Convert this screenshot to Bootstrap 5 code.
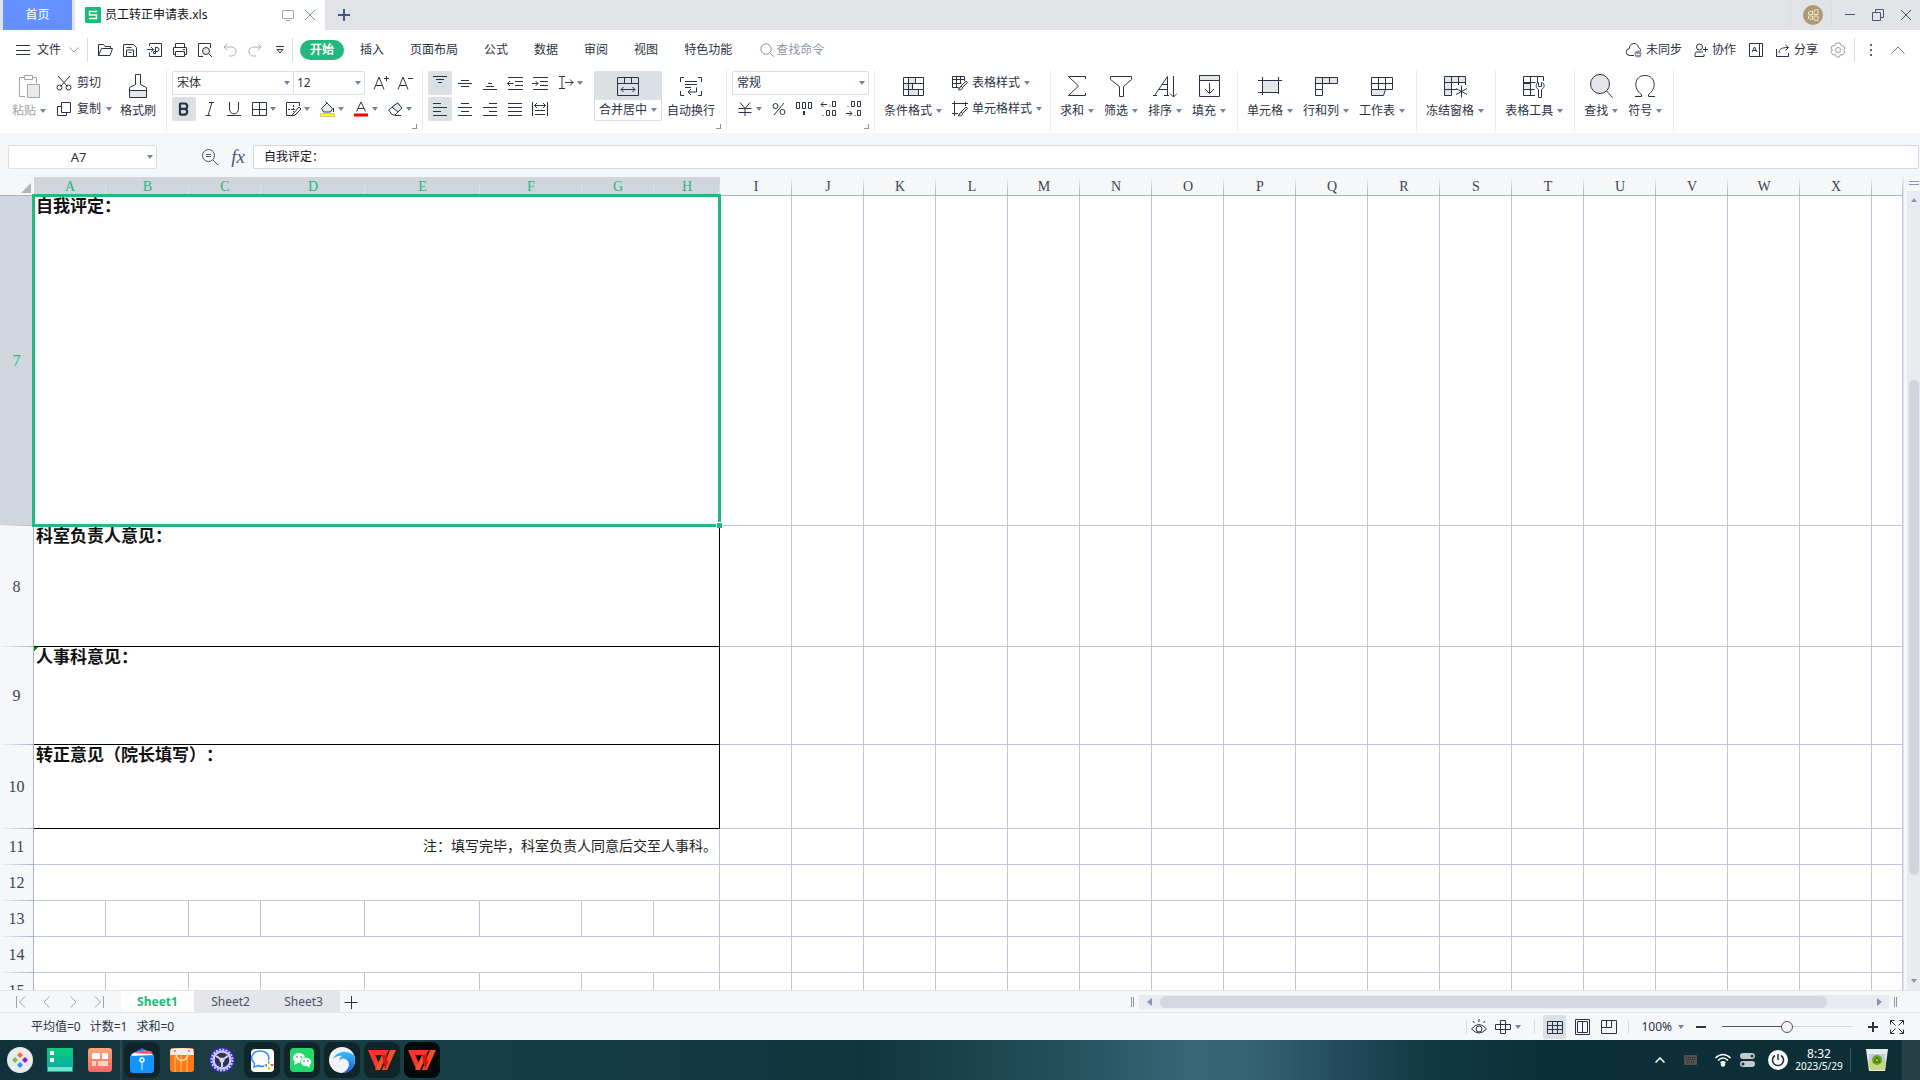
<!DOCTYPE html>
<html lang="zh-CN">
<head>
<meta charset="utf-8">
<meta name="viewport" content="width=device-width, initial-scale=1">
<title>员工转正申请表.xls</title>
<link rel="stylesheet" href="https://cdn.jsdelivr.net/npm/bootstrap@5.3.0/dist/css/bootstrap.min.css">
<style>
:root{--ink:#2b3245;--mute:#7683a0;--green:#22b97c;--line:#bfc6da;--panel:#f5f7f9}
body{font:12px/24px "Noto Sans","Noto Sans CJK SC",sans-serif;color:var(--ink);background:var(--panel);overflow:hidden;text-spacing-trim:space-all}
body>*{flex-shrink:0}
svg{flex:none;display:block}
svg:not([fill]){fill:none}
svg:not([stroke]){stroke:currentColor}
.i14{width:14px;height:14px}.i16{width:16px;height:16px}
.tool{font:inherit;color:inherit;background:none;border:0;padding:0;display:flex;align-items:center;justify-content:center;flex:none;white-space:nowrap}
.arrow{width:0;height:0;border:3px solid transparent;border-top:4px solid var(--mute);border-bottom:0;flex:none}
.rule{width:1px;height:24px;background:#d9dbe0;flex:none}
/* title bar */
.titlebar{height:30px;background:#e1e3e7;padding-left:3px}
.home-tab{width:69px;background:#6490ff;color:#fff;margin-right:3px}
.doc-tab{width:250px;background:#fff;padding:0 8px 0 10px;color:#111}
.doc-tab span{flex:1 1 auto}
.avatar{width:20px;height:20px;border-radius:50%;background:#ab9a75;color:#eee2bd}
.winbtn{width:28px;height:30px;color:#48577a}
/* menu bar */
.menubar{height:40px;background:#fff;padding:0 15px}
.file-btn{gap:8px}
.file-btn svg:first-child{margin-right:-2px}
.quick .tool{width:25px;height:24px}
.menu-link{padding:0 13px;line-height:20px;color:var(--ink);white-space:nowrap}
.menu-link.active{background:var(--green);color:#fff;font-weight:700;border-radius:10px;margin:0 3px;padding:0 10px}
.search-box{gap:2px;padding-left:15px}
.finder{width:80px;border:0;padding:0;font:inherit;line-height:20px;background:none}
.finder::placeholder{color:#8b96ac;opacity:1}
/* ribbon */
.ribbon{height:63px;background:#fff}
.rgroup{position:relative;flex:none;display:flex;padding:1px 6px 0 4px;border-right:1px solid #ebedf0;height:61px}
.launcher{position:absolute;right:5px;bottom:2px;width:5px;height:5px;padding:0;background:none;border:solid #8b96ac;border-width:0 1px 1px 0}
.g-clip{width:167px}.g-font{width:256px;padding-left:5px}.g-align{width:304px;padding-left:5px}.g-num{width:148px;padding-left:5px}.g-style{width:176px}
.stack2{display:flex;flex-direction:column;gap:2px}
.line24{display:flex;height:24px}
.sq{width:24px;height:24px;border-radius:2px}
.on{background:#dbe0e5}
.g-font .on{margin-right:2px}
.drop{width:34px;height:24px;gap:3px}
.gap1{gap:1px}
.big{flex-direction:column;height:50px;padding:0 5px;justify-content:flex-start}
.big>svg{height:29px;width:24px}
.big>span{display:flex;align-items:center;gap:4px;line-height:21px;height:21px}
.clip1{margin-left:5px;width:40px;color:#9fa3ac}
.clip2{width:67px}
.clip2 .tool{gap:5px;height:24px;justify-content:flex-start;padding-left:7px}
.paint{padding:0}
.merge{width:68px;padding:0;background:#dbe0e5;border-radius:2px;margin-left:7px}
.merge>span{background:#fff;width:66px;justify-content:center;height:20px;line-height:20px}
.styles .tool{height:24px;gap:4px;justify-content:flex-start;padding-left:5px}
.pick{appearance:none;border:1px solid #dcdee3;border-radius:2px;height:24px;padding:0 4px;font:inherit;line-height:20px;color:var(--ink);background:#fff url("data:image/svg+xml,%3Csvg xmlns='http://www.w3.org/2000/svg' width='6' height='4'%3E%3Cpath d='M0 0h6L3 4z' fill='%237683a0'/%3E%3C/svg%3E") no-repeat right 3px center}
.pick-font{width:122px}.pick-size{width:72px;margin-left:-1px;padding-left:3px;margin-right:4px}.pick-num{width:137px}
/* formula bar */
.fbar{height:44px;padding:12px 1px 8px 8px}
.pick-cell{width:149px;text-align-last:center;padding:0 12px 0 4px;font-size:13px}
.lens{width:26px;margin-left:40px;color:#48577a}
.fx-sign{font:italic 19px/24px "Liberation Serif",serif;width:22px;color:#48577a}
.formula{border:1px solid #d3d6de;border-radius:2px;height:24px;padding:0 10px;font:inherit;color:#111;min-width:0}
/* grid */
.sheet{table-layout:fixed;width:100%;border-collapse:separate;border-spacing:0;background:#fff;font-family:"Liberation Serif","Noto Sans CJK SC",serif}
.sheet td{border:solid var(--line);border-width:0 1px 1px 0;padding:0 3px}
.sheet th{font-weight:400;text-align:center;color:#3d4352;padding:0;background-color:var(--panel)}
.sheet thead th{height:19px;font-size:14px;line-height:16px;padding-top:2px;border-bottom:1px solid #a9b1c9;background-image:linear-gradient(#f5f7f9,#a9b1c9);background-size:1px 100%;background-position:right;background-repeat:no-repeat}
.sheet tbody th{font-size:16px;border-right:1px solid #a9b1c9;background-image:linear-gradient(90deg,#f5f7f9,#a9b1c9);background-size:100% 1px;background-position:bottom;background-repeat:no-repeat}
.sheet thead th.hot,.sheet tbody th.hot{background-color:#d1d5dd;color:var(--green)}
.sheet thead th.hot{background-image:linear-gradient(#d1d5dd,#e4e6eb)}
.sheet thead th.corner{background-image:none}
.sheet .corner svg{margin:2px 3px 0 auto}
.sheet .form-cell{border-color:#000;font-weight:700;font-size:17px;line-height:22px;vertical-align:top;color:#111;padding:0 2px}
.sheet .note-cell{font-size:14px;text-align:right;color:#222;padding:0 2px}
.sheet .flagged{background:linear-gradient(135deg,#0a8a1c 3px,transparent 3px) no-repeat}
.selected-cell{position:relative}
.selection{position:absolute;inset:-2px;border:3px solid var(--green);z-index:1}
.selection i{position:absolute;right:-4px;bottom:-4px;width:6px;height:6px;background:var(--green);border:solid #fff;border-width:1px 0 0 1px}
.r7{height:330px}.r8{height:121px}.r9{height:98px}.r10{height:84px}.rs{height:36px}
.c-head{width:34px}.c-s{width:72px}.c-b{width:83px}.c-d{width:104px}.c-e{width:115px}.c-f{width:102px}.c-h{width:66px}
.gridwrap{min-width:0;min-height:0;overflow:hidden}
main.gridwrap{flex-basis:0!important}
.vscroll{width:17px;padding-left:3px;border-left:1px solid #e1e4ea}
.vsplit{height:14px}
.vtrack{background:#e9ebf0;padding:4px 2px}
.vrun{flex:1 1 0}
.vthumb{width:10px;border-radius:5px;background:#d1d5dd}
/* sheet tabs */
.tabbar{height:22px;border-top:1px solid #e1e4ea}
.step{width:26px;color:#9da3af}
.steps{width:121px;padding-left:8px}
.sheet-tab{width:73px;background:#e4e6eb;color:#48506a;line-height:22px;text-align:center}
.sheet-tab.active{background:#fff;color:var(--green);font-weight:700}
.grip{width:3px;height:10px;border:solid #8795b5;border-width:0 1px}
.grip-end{margin-right:23px}
.htrack{width:750px;height:14px;background:#e9ebf0;padding:1px 7px 1px 8px;margin:0 5px}
.hthumb{width:667px;height:12px;border-radius:6px;background:#d4d7e0}
.htri{width:0;height:0;border:4px solid transparent}
.htri.l{border-right:5px solid #8795b5;border-left:0}.htri.r{border-left:5px solid #8795b5;border-right:0}
/* status bar */
.status{height:28px;border-top:1px solid #e1e4ea;padding:0 16px 0 31px}
.status .rule{height:14px}
.totals{gap:9px}
.view-rule{margin:0 8px 0 13px}
.view{width:23px;height:24px;border-radius:2px}
.percent{gap:6px}
.zoomer{appearance:none;width:130px;height:14px;margin:0 16px;background:linear-gradient(90deg,#48577a 50%,#d1d5dd 50%) center/100% 1px no-repeat}
.zoomer::-webkit-slider-thumb{appearance:none;width:12px;height:12px;border-radius:50%;background:#f3f3f3;border:1px solid #555}
/* desktop taskbar */
.taskbar{height:40px;background:linear-gradient(90deg,#10313a 0,#1c3b42 11%,#163e47 25%,#12343d 45%,#234f5a 55%,#376678 62%,#366275 65%,#1f4658 71%,#113a42 74%,#0d2f38 80%,#0d2e35 100%);color:#fff}
.app{width:40px;padding:2px;border:0;background:none}
.app>span{display:flex;align-items:center;justify-content:center;height:36px;border-radius:8px}
.app.open>span{background:#102529}
.app.current>span{background:#030a0c}
.app.first{border-left:2px solid #2d4a50;width:42px}
.app svg{width:28px;height:28px}
.app svg:not([stroke]){stroke:none}
.tray-up{margin-right:19px}
.tray-kb{margin-right:17px}
.tray-sw{margin-right:13px}
.bin{margin:0 14px 0 15px}
.clock{line-height:12px;width:54px;text-align:center;font-size:10px;margin-left:4px}
.clock b{font-weight:400;font-size:12px;display:block}
.peek{width:18px;height:40px;background:#264047}
</style>
</head>
<body class="vh-100 d-flex flex-column">

<svg width="0" height="0" class="position-absolute" aria-hidden="true">
<defs>
<symbol id="x" viewBox="0 0 14 14"><path d="M2 2l10 10M12 2L2 12"/></symbol>
<symbol id="open" viewBox="0 0 16 16"><path d="M1.500 13.500v-11h5l1.500 2h5.500v2M1.500 13.500l3-7h11l-2.500 7z"/></symbol>
<symbol id="save" viewBox="0 0 16 16"><path d="M1.500 14.500v-12h10l3 3v9zM4.500 14v-6h7v6M4.500 5.500h5M6.500 10.500h3"/></symbol>
<symbol id="pdf" viewBox="0 0 16 16"><path d="M2.500 4v-2.500h12v13h-12v-4M0 7.500h6M4 5l2.500 2.500L4 10M8 5.500h2a1.500 1.500 0 0 1 0 4H6.500v2h2v-6"/></symbol>
<symbol id="print" viewBox="0 0 16 16"><path d="M3.500 5V1.500h9V5M3.500 12.500h-2v-7h13v7h-2M3.500 9.500h9v5h-9zM11 7.500h2"/></symbol>
<symbol id="preview" viewBox="0 0 16 16"><path d="M6 14.500H1.500v-13h12V6"/><circle cx="9" cy="9" r="3.500" fill="#e4e6ea"/><path d="M11.500 11.500L15 15"/></symbol>
<symbol id="undo" viewBox="0 0 16 16"><path d="M5.500 1.500l-3.500 3.500 3.500 3.500M2 5h7.500a4.500 4.500 0 0 1 0 9H7"/></symbol>
<symbol id="redo" viewBox="0 0 16 16"><path d="M10.500 1.500L14 5l-3.500 3.500M14 5H6.500a4.500 4.500 0 0 0 0 9H9"/></symbol>
<symbol id="search" viewBox="0 0 14 14"><circle cx="6" cy="6" r="5.200"/><path d="M9.800 9.800l4 4"/></symbol>
<symbol id="paste" viewBox="0 0 24 29"><path d="M8 25.500H2.500v-19h5M15.500 6.500h4v6M7.500 8.500v-4h8v4z"/><path d="M10.500 13.500h12v13h-12z" fill="#e9eaec"/></symbol>
<symbol id="cut" viewBox="0 0 16 16"><path d="M2 1l9.500 10.500M14 1L4.500 11.500"/><circle cx="3.500" cy="12.500" r="2.500"/><circle cx="12.500" cy="12.500" r="2.500"/></symbol>
<symbol id="copy" viewBox="0 0 16 16"><path d="M5.500 1.500h9v10h-9zM5.500 5.500h-4v9h9v-3"/></symbol>
<symbol id="brush" viewBox="0 0 24 29"><path d="M3.500 19.500h17v7h-17z" fill="#e4e6ea"/><path d="M3.500 19.500v-3l6-3v-10h5v10l6 3v3"/></symbol>
<symbol id="bold" viewBox="0 0 16 16"><path d="M4 2v12M4 2.500h4.500a2.700 2.700 0 0 1 0 5.400H4M4 8h5a2.900 2.900 0 0 1 0 5.600H4" stroke-width="2.200"/></symbol>
<symbol id="italic" viewBox="0 0 16 16"><path d="M7 1.500h5M3.500 14.500h5M10 1.500l-4 13"/></symbol>
<symbol id="uline" viewBox="0 0 16 16"><path d="M3.500 1v7a4 4.300 0 0 0 9 0V1M1 14.500h14"/></symbol>
<symbol id="borders" viewBox="0 0 16 16"><path d="M1.500 1.500h14v13h-14zM8.500 1.500v13M1.500 8.500h14"/></symbol>
<symbol id="draw" viewBox="0 0 16 16"><path d="M14.500 5V1.500h-13v13H7"/><path d="M3 8.500h7M8.500 4v7" stroke-dasharray="2 1"/><path d="M8 13l6-7 2 2-6 6-3 1z" fill="#fff"/></symbol>
<symbol id="fill" viewBox="0 0 16 16"><path d="M2.500 7.500L8 2l5.500 5.500-2 3.500h-7z" fill="#e9eaec"/><path d="M8 2L6.500.5M14.500 7v4"/><path d="M1.500 12.500h14v3h-14z" fill="#ff0" stroke="#999" stroke-width=".5"/></symbol>
<symbol id="fontcolor" viewBox="0 0 16 16"><path d="M3.500 10.500L8 1l4.500 9.500M5 7.500h6"/><path d="M1 14h14" stroke="#f00" stroke-width="3"/></symbol>
<symbol id="eraser" viewBox="0 0 16 16"><path d="M1.500 9l4 5H8l7-7-4.500-5z"/><path d="M5 6l5.500-4L15 7l-4 4z" fill="#e4e6ea"/><path d="M8 14.500h6"/></symbol>
<symbol id="vtop" viewBox="0 0 16 16"><path d="M1 1.500h14M4 4.500h8M6 7.500h4"/></symbol>
<symbol id="vmid" viewBox="0 0 16 16"><path d="M4 5.500h8M1 8.500h14M4 11.500h8"/></symbol>
<symbol id="vbot" viewBox="0 0 16 16"><path d="M6 8.500h4M4 11.500h8M1 14.500h14"/></symbol>
<symbol id="outd" viewBox="0 0 16 16"><path d="M1 2.500h15M8 6.500h8M8 10.500h8M1 14.500h15M.5 8.500h6M3 6L.5 8.500 3 11"/></symbol>
<symbol id="ind" viewBox="0 0 16 16"><path d="M1 2.500h15M8 6.500h8M8 10.500h8M1 14.500h15M0 8.500h6M3.500 6L6 8.500 3.500 11"/></symbol>
<symbol id="orient" viewBox="0 0 16 16"><path d="M1 1.500h6M1 13.500h6M4 1.500v12M7 7.500h8M12 4.500l3 3-3 3"/></symbol>
<symbol id="hleft" viewBox="0 0 16 16"><path d="M1 2.500h8M1 6.500h14M1 10.500h8M1 14.500h14"/></symbol>
<symbol id="hmid" viewBox="0 0 16 16"><path d="M4 2.500h8M1 6.500h14M4 10.500h8M1 14.500h14"/></symbol>
<symbol id="hright" viewBox="0 0 16 16"><path d="M7 2.500h8M1 6.500h14M7 10.500h8M1 14.500h14"/></symbol>
<symbol id="hjust" viewBox="0 0 16 16"><path d="M1 2.500h14M1 6.500h14M1 10.500h14M1 14.500h14"/></symbol>
<symbol id="hdist" viewBox="0 0 16 16"><path d="M.5 1v14M15.500 1v14M3 4.500h10M5 2L2.500 4.500 5 7M11 2l2.500 2.500L11 7M3 9.500h10M3 13.500h10"/></symbol>
<symbol id="mergei" viewBox="0 0 24 29"><path d="M1.500 6.500h21v18h-21zM1.500 12.500h21M8.500 6.500v6M15.500 6.500v6M5 18.500h14M7.500 16L5 18.500 7.500 21M16.500 16l2.500 2.500-2.500 2.500"/></symbol>
<symbol id="wrap" viewBox="0 0 24 29"><path d="M1.500 11V6.500H5M19 6.500h3.500V11M22.500 20v4.500H19M5 24.500H1.500V20M6 10.500h12M6 13.500h12M6 16.500h6M17.500 16.500v4.500H9M12 18l-3 3 3 3"/></symbol>
<symbol id="yen" viewBox="0 0 16 16"><path d="M3 1.500l5 6 5-6M8 7.500V15M1.500 7.500h13M1.500 11.500h13"/></symbol>
<symbol id="pct" viewBox="0 0 16 16"><path d="M13 2L3 14"/><circle cx="4.500" cy="5" r="2.500"/><circle cx="11.500" cy="11" r="2.500"/></symbol>
<symbol id="thou" viewBox="0 0 18 16"><path d="M1.500 1.500h3v6h-3zM7.500 1.500h3v6h-3zM13.500 1.500h3v6h-3z"/><path d="M9 10v4" stroke-width="2"/></symbol>
<symbol id="incd" viewBox="0 0 18 16"><path d="M1 3.500h6M3.500 1L1 3.500 3.500 6M12.500.5h3v5h-3zM6.500 9.500h3v5h-3zM12.500 9.500h3v5h-3zM9.500 5h1M2.500 14.500h1"/></symbol>
<symbol id="decd" viewBox="0 0 18 16"><path d="M1 12.500h6M4.500 10L7 12.500 4.500 15M12.500 9.500h3v5h-3zM6.500.5h3v5h-3zM12.500.5h3v5h-3zM9.500 14.500h1M2.500 5.500h1"/></symbol>
<symbol id="cond" viewBox="0 0 24 29"><path d="M2.500 6.500h20v18h-20z" fill="#fff"/><path d="M7.500 6.500h7v6h-7zM2.500 12.500h9v6h-9zM7.500 18.500h10v6h-10z" fill="#e4e6ea"/><path d="M2.500 12.500h20M2.500 18.500h20M7.500 6.500v18"/></symbol>
<symbol id="tstyle" viewBox="0 0 16 16"><path d="M12.500 6V1.500h-12v11h6M.5 4.500h12M.5 8.500h9M4.500 1.500v11M8.500 1.500v7"/><path d="M14 6l1.500 1.500-5 5-1.500-1.500zM9 11.500c-2 0-1 3-3 3 2 1 5 0 4.500-2" fill="#e4e6ea"/></symbol>
<symbol id="cstyle" viewBox="0 0 16 16"><path d="M0 2.500h16M2.500 0v15M13.500 1v4M0 12.500h6"/><path d="M14 6l1.500 1.500-5 5-1.500-1.500zM9 11.500c-2 0-1 3-3 3 2 1 5 0 4.500-2" fill="#e4e6ea"/></symbol>
<symbol id="sum" viewBox="0 0 24 29"><path d="M20.500 8V5.500h-17l10 9.500-10 9.500h17V22"/></symbol>
<symbol id="funnel" viewBox="0 0 24 29"><path d="M1.500 5.500h21v3l-8 7v10h-4v-10l-9-7z"/></symbol>
<symbol id="sort" viewBox="0 0 24 29"><path d="M14.500 24.500v-19L1.500 24.500M5.500 18.500h9M9 13.500h5.500M20.500 5v21M17 22.500l3.500 3.500 3.500-3.500M0 24.500h4M11 24.500h5"/></symbol>
<symbol id="filld" viewBox="0 0 24 29"><path d="M2.500 4.500h20v21h-20z"/><path d="M2.500 4.500h20v5h-20z" fill="#e4e6ea"/><path d="M12.500 12v10M8 18l4.500 4.500L17 18"/></symbol>
<symbol id="cell" viewBox="0 0 24 29"><path d="M4.500 9.500h16v12h-16z" fill="#e4e6ea"/><path d="M0 9.500h24M0 21.500h18M4.500 6v18M20.500 6v13M20.500 21v2"/></symbol>
<symbol id="rowcol" viewBox="0 0 24 29"><path d="M1.500 6.500h22v6h-22z" fill="#e4e6ea"/><path d="M8.500 6.500v18h-7v-18M15.500 6.500v6M1.500 18.500h7"/></symbol>
<symbol id="wsheet" viewBox="0 0 24 29"><path d="M1.500 6.500h21v12h-21zM1.500 12.500h21M8.500 6.500v12M15.500 6.500v12"/><path d="M1.500 18.500h14l-2 6h-12z" fill="#e4e6ea"/></symbol>
<symbol id="freeze" viewBox="0 0 24 29"><path d="M1.500 5.500h21v6h-14v13h-7z" fill="#e4e6ea"/><path d="M8.500 5.500v6h-7M15.500 5.500v6M1.500 18.500h12M22.500 11v3M15.500 11v3M18.500 14.500v12M13 17.500l11 6M24 17.500l-11 6"/></symbol>
<symbol id="ttools" viewBox="0 0 24 29"><path d="M1.500 12.500h7v6h-7z" fill="#e4e6ea"/><path d="M13 24.500H1.500v-19h20V10M1.500 11.500h12M1.500 18.500h11M8.500 5.500v19M15.500 5.500v6M16.500 26.500v-8c-4-2-2-7 0-7v4h3v-4c3 0 4 5 0 7v8z"/></symbol>
<symbol id="findb" viewBox="0 0 24 29"><circle cx="11" cy="13" r="9.500" fill="#e4e6ea"/><path d="M17.500 20l6 6.500"/></symbol>
<symbol id="omega" viewBox="0 0 24 29"><path d="M2 25.500h6.500v-2C0 18 1 4.500 12 4.500s12 13.500 3.500 19v2H22"/></symbol>
<symbol id="vnormal" viewBox="0 0 16 16"><path d="M.5 2.500h15v12H.5zM.5 6.500h15M.5 10.500h15M5.500 2.500v12M10.500 2.500v12"/></symbol>
<symbol id="vpage" viewBox="0 0 16 16"><path d="M1.500.5h14v15h-14zM3.500 2.500h10v11h-10zM8.500 2.500v11"/></symbol>
<symbol id="vbreak" viewBox="0 0 16 16"><path d="M.5 1.500h15v13H.5zM5.500 1.500v7h5v-7M.5 8.500h5M10.500 1.500v7"/></symbol>
<symbol id="wps" viewBox="0 0 28 28"><path d="M0 4h21l-3 5H7l4 8-3 6z" fill="#ff3327"/><path d="M7 24L14 9h5l-7 15z" fill="#f5522c"/><path d="M14 24l8-20h6l-9 20z" fill="#ff4b25"/><path d="M14 9h4l2 8-3 7z" fill="#c9171c"/></symbol>
</defs>
</svg>

<header class="titlebar d-flex align-items-stretch">
  <button class="tool home-tab">首页</button>
  <div class="doc-tab d-flex align-items-center gap-1">
    <svg class="i16" viewBox="0 0 16 16" stroke="#fff"><rect width="16" height="16" rx="1" fill="#16bd78" stroke="none"/><path d="M12 4.500H4.500v3.500h7v3.500H4" stroke-width="1.500"/></svg>
    <span>员工转正申请表.xls</span>
    <svg class="i14" viewBox="0 0 14 14" stroke="#9aa9c6"><path d="M1.500 2.500h11v8h-11zM5 12.500h4"/></svg>
    <button class="tool ms-1" aria-label="关闭标签"><svg class="i14" stroke="#8191b3"><use href="#x"/></svg></button>
  </div>
  <button class="tool px-2 ms-1" aria-label="新建"><svg class="i14" viewBox="0 0 14 14" stroke="#48577a" stroke-width="2"><path d="M1 7h12M7 1v12"/></svg></button>
  <div class="d-flex align-items-center ms-auto">
    <span class="rule me-2"></span>
    <button class="tool avatar mx-1" aria-label="账号"><svg width="12" height="12" viewBox="0 0 12 12"><path d="M1.500 3l4-1v3.500h-4zM7 1.500l4-1v5H7zM1.500 7h4v3.500l-4-1zM7 7h4v5l-4-1z"/></svg></button>
    <span class="rule ms-1"></span>
    <button class="tool winbtn ms-1" aria-label="最小化"><svg class="i14" viewBox="0 0 14 14"><path d="M2 6.500h10"/></svg></button>
    <button class="tool winbtn" aria-label="还原"><svg class="i14" viewBox="0 0 14 14"><path d="M1.500 4.500h8v8h-8zM4.500 4V1.500h8v8H10"/></svg></button>
    <button class="tool winbtn" aria-label="关闭"><svg class="i14"><use href="#x"/></svg></button>
  </div>
</header>

<nav class="menubar d-flex align-items-center">
  <button class="tool file-btn"><svg width="16" height="14" viewBox="0 0 16 14"><path d="M1 2.500h14M1 7.500h14M1 11.500h14"/></svg><span>文件</span><svg width="10" height="6" viewBox="0 0 10 6" stroke="#999"><path d="M.5.5L5 5 9.500.5"/></svg></button>
  <span class="rule ms-2"></span>
  <div class="quick d-flex ms-1">
    <button class="tool" aria-label="打开"><svg class="i16"><use href="#open"/></svg></button>
    <button class="tool" aria-label="保存"><svg class="i16"><use href="#save"/></svg></button>
    <button class="tool" aria-label="输出为PDF"><svg class="i16"><use href="#pdf"/></svg></button>
    <button class="tool" aria-label="打印"><svg class="i16"><use href="#print"/></svg></button>
    <button class="tool" aria-label="打印预览"><svg class="i16"><use href="#preview"/></svg></button>
    <button class="tool" aria-label="撤销"><svg class="i16" stroke="#aaaeb6"><use href="#undo"/></svg></button>
    <button class="tool" aria-label="恢复"><svg class="i16" stroke="#aaaeb6"><use href="#redo"/></svg></button>
    <button class="tool" aria-label="更多"><svg width="8" height="8" viewBox="0 0 8 8"><path d="M0 .5h8M1 3.500h6L4 7z"/></svg></button>
  </div>
  <span class="rule"></span>
  <div class="d-flex ms-1">
    <a href="#" class="menu-link text-decoration-none active">开始</a>
    <a href="#" class="menu-link text-decoration-none">插入</a>
    <a href="#" class="menu-link text-decoration-none">页面布局</a>
    <a href="#" class="menu-link text-decoration-none">公式</a>
    <a href="#" class="menu-link text-decoration-none">数据</a>
    <a href="#" class="menu-link text-decoration-none">审阅</a>
    <a href="#" class="menu-link text-decoration-none">视图</a>
    <a href="#" class="menu-link text-decoration-none">特色功能</a>
  </div>
  <label class="search-box d-flex align-items-center" for="finder"><svg class="i14" stroke="#8b96ac"><use href="#search"/></svg><input id="finder" class="finder" placeholder="查找命令" aria-label="查找命令"></label>
  <div class="d-flex align-items-center ms-auto gap-2">
    <button class="tool gap-1 me-1"><svg class="i16" viewBox="0 0 16 16"><path d="M8 13.500H4a3.500 3.500 0 0 1-.5-7 4.500 4.500 0 0 1 9-1c2 1 2.500 2.500 1.500 4"/><circle cx="12" cy="12" r="3.500" fill="#8795b5" stroke="none"/><path d="M10 12.500h4" stroke="#fff"/></svg>未同步</button>
    <button class="tool gap-1 me-1"><svg class="i14" viewBox="0 0 14 14"><circle cx="5.500" cy="4" r="3"/><path d="M9 9H3a2 2 0 0 0-2 2v2.500h9V11M9 6.500h5M11.500 4v5"/></svg>协作</button>
    <button class="tool me-1" aria-label="翻译"><svg class="i16" viewBox="0 0 16 16"><path d="M1.500 1.500h13v13h-13zM11.500 1.500v13M4 10l2.500-5L9 10M5 8.500h3"/></svg></button>
    <button class="tool gap-1 me-1"><svg class="i14" viewBox="0 0 14 14"><path d="M.5 6v7.500h12V10M3 10c0-4 3-5.500 9-5.500M9.500 2L12.500 4.500 9.500 7.500"/></svg>分享</button>
    <button class="tool" aria-label="设置"><svg class="i16" viewBox="0 0 16 16" stroke="#999fa9"><path d="M6 1h4l1 2.500 3 .5 1 3-1.500 1L15 10l-2 3-2.500-.5L9.500 15h-3l-1-2.500L3 13l-2-3 1.500-2L1 7l1-3 3-.5z"/><circle cx="8" cy="8" r="2.500"/></svg></button>
    <span class="rule"></span>
    <button class="tool me-1" aria-label="更多选项"><svg width="16" height="16" viewBox="0 0 16 16" fill="#5b6275" stroke="none"><path d="M7 2h2v2H7zM7 7h2v2H7zM7 12h2v2H7z"/></svg></button>
    <button class="tool" aria-label="收起功能区"><svg width="14" height="8" viewBox="0 0 14 8" stroke="#777"><path d="M.5 7.500L7 1l6.500 6.500"/></svg></button>
  </div>
</nav>

<section class="ribbon d-flex">
  <div class="rgroup g-clip">
    <button class="tool big clip1"><svg><use href="#paste"/></svg><span>粘贴<i class="arrow"></i></span></button>
    <div class="stack2 clip2">
      <button class="tool"><svg class="i16"><use href="#cut"/></svg>剪切</button>
      <button class="tool"><svg class="i16"><use href="#copy"/></svg>复制<i class="arrow"></i></button>
    </div>
    <button class="tool big paint ms-1"><svg><use href="#brush"/></svg><span>格式刷</span></button>
  </div>
  <div class="rgroup g-font">
    <div class="stack2">
      <div class="line24">
        <select class="pick pick-font" aria-label="字体"><option>宋体</option></select>
        <select class="pick pick-size" aria-label="字号"><option>12</option></select>
        <button class="tool sq" aria-label="增大字号"><svg class="i16" viewBox="0 0 16 16"><path d="M1 14.500L6 2l5 12.500M3 10.500h6M11 3.500h5M13.500 1v5"/></svg></button>
        <button class="tool sq" aria-label="减小字号"><svg class="i16" viewBox="0 0 16 16"><path d="M1 14.500L6 2l5 12.500M3 10.500h6M11 3.500h5"/></svg></button>
      </div>
      <div class="line24">
        <button class="tool sq on" aria-label="加粗"><svg class="i16"><use href="#bold"/></svg></button>
        <button class="tool sq" aria-label="倾斜"><svg class="i16"><use href="#italic"/></svg></button>
        <button class="tool sq" aria-label="下划线"><svg class="i16"><use href="#uline"/></svg></button>
        <button class="tool drop" aria-label="边框"><svg class="i16"><use href="#borders"/></svg><i class="arrow"></i></button>
        <button class="tool drop" aria-label="绘图边框"><svg class="i16"><use href="#draw"/></svg><i class="arrow"></i></button>
        <button class="tool drop" aria-label="填充颜色"><svg class="i16"><use href="#fill"/></svg><i class="arrow"></i></button>
        <button class="tool drop" aria-label="字体颜色"><svg class="i16"><use href="#fontcolor"/></svg><i class="arrow"></i></button>
        <button class="tool drop" aria-label="清除"><svg class="i16"><use href="#eraser"/></svg><i class="arrow"></i></button>
      </div>
    </div>
    <button class="launcher" aria-label="字体设置"></button>
  </div>
  <div class="rgroup g-align">
    <div class="stack2">
      <div class="line24 gap1">
        <button class="tool sq on" aria-label="顶端对齐"><svg class="i16"><use href="#vtop"/></svg></button>
        <button class="tool sq" aria-label="垂直居中"><svg class="i16"><use href="#vmid"/></svg></button>
        <button class="tool sq" aria-label="底端对齐"><svg class="i16"><use href="#vbot"/></svg></button>
        <button class="tool sq" aria-label="减少缩进"><svg class="i16"><use href="#outd"/></svg></button>
        <button class="tool sq" aria-label="增加缩进"><svg class="i16"><use href="#ind"/></svg></button>
        <button class="tool drop" aria-label="文字方向"><svg class="i16"><use href="#orient"/></svg><i class="arrow"></i></button>
      </div>
      <div class="line24 gap1">
        <button class="tool sq on" aria-label="左对齐"><svg class="i16"><use href="#hleft"/></svg></button>
        <button class="tool sq" aria-label="水平居中"><svg class="i16"><use href="#hmid"/></svg></button>
        <button class="tool sq" aria-label="右对齐"><svg class="i16"><use href="#hright"/></svg></button>
        <button class="tool sq" aria-label="两端对齐"><svg class="i16"><use href="#hjust"/></svg></button>
        <button class="tool sq" aria-label="分散对齐"><svg class="i16"><use href="#hdist"/></svg></button>
      </div>
    </div>
    <button class="tool big merge"><svg><use href="#mergei"/></svg><span>合并居中<i class="arrow"></i></span></button>
    <button class="tool big"><svg><use href="#wrap"/></svg><span>自动换行</span></button>
    <button class="launcher" aria-label="对齐设置"></button>
  </div>
  <div class="rgroup g-num">
    <div class="stack2">
      <select class="pick pick-num" aria-label="数字格式"><option>常规</option></select>
      <div class="line24 gap1">
        <button class="tool drop" aria-label="货币"><svg class="i16"><use href="#yen"/></svg><i class="arrow"></i></button>
        <button class="tool sq" aria-label="百分比"><svg class="i16"><use href="#pct"/></svg></button>
        <button class="tool sq" aria-label="千位分隔"><svg width="18" height="16"><use href="#thou"/></svg></button>
        <button class="tool sq" aria-label="增加小数位"><svg width="18" height="16"><use href="#incd"/></svg></button>
        <button class="tool sq" aria-label="减少小数位"><svg width="18" height="16"><use href="#decd"/></svg></button>
      </div>
    </div>
    <button class="launcher" aria-label="数字设置"></button>
  </div>
  <div class="rgroup g-style">
    <button class="tool big"><svg><use href="#cond"/></svg><span>条件格式<i class="arrow"></i></span></button>
    <div class="stack2 styles">
      <button class="tool"><svg class="i16"><use href="#tstyle"/></svg>表格样式<i class="arrow"></i></button>
      <button class="tool"><svg class="i16"><use href="#cstyle"/></svg>单元格样式<i class="arrow"></i></button>
    </div>
  </div>
  <div class="rgroup">
    <button class="tool big"><svg><use href="#sum"/></svg><span>求和<i class="arrow"></i></span></button>
    <button class="tool big"><svg><use href="#funnel"/></svg><span>筛选<i class="arrow"></i></span></button>
    <button class="tool big"><svg><use href="#sort"/></svg><span>排序<i class="arrow"></i></span></button>
    <button class="tool big"><svg><use href="#filld"/></svg><span>填充<i class="arrow"></i></span></button>
  </div>
  <div class="rgroup">
    <button class="tool big"><svg><use href="#cell"/></svg><span>单元格<i class="arrow"></i></span></button>
    <button class="tool big"><svg><use href="#rowcol"/></svg><span>行和列<i class="arrow"></i></span></button>
    <button class="tool big"><svg><use href="#wsheet"/></svg><span>工作表<i class="arrow"></i></span></button>
  </div>
  <div class="rgroup"><button class="tool big"><svg><use href="#freeze"/></svg><span>冻结窗格<i class="arrow"></i></span></button></div>
  <div class="rgroup"><button class="tool big"><svg><use href="#ttools"/></svg><span>表格工具<i class="arrow"></i></span></button></div>
  <div class="rgroup">
    <button class="tool big"><svg><use href="#findb"/></svg><span>查找<i class="arrow"></i></span></button>
    <button class="tool big"><svg><use href="#omega"/></svg><span>符号<i class="arrow"></i></span></button>
  </div>
</section>

<section class="fbar d-flex">
  <select class="pick pick-cell" aria-label="名称框"><option>A7</option></select>
  <button class="tool lens" aria-label="浏览公式结果"><svg width="18" height="18" viewBox="0 0 18 18"><circle cx="7.500" cy="7.500" r="6"/><path d="M12 12l5 5M5 6.500h5M5 8.500h5"/></svg></button>
  <button class="tool fx-sign mx-1">fx</button>
  <input class="formula flex-fill" value="自我评定：" aria-label="编辑栏">
</section>

<main class="d-flex flex-fill gridwrap">
  <div class="flex-fill gridwrap">
    <table class="sheet">
      <colgroup><col class="c-head"><col class="c-s"><col class="c-b"><col class="c-s"><col class="c-d"><col class="c-e"><col class="c-f"><col class="c-s"><col class="c-h"><col class="c-s" span="16"><col></colgroup>
      <thead><tr><th class="corner"><svg width="10" height="10" viewBox="0 0 10 10" fill="#b3b5ba" stroke="none"><path d="M10 0v10H0z"/></svg></th><th class="hot">A</th><th class="hot">B</th><th class="hot">C</th><th class="hot">D</th><th class="hot">E</th><th class="hot">F</th><th class="hot">G</th><th class="hot">H</th><th>I</th><th>J</th><th>K</th><th>L</th><th>M</th><th>N</th><th>O</th><th>P</th><th>Q</th><th>R</th><th>S</th><th>T</th><th>U</th><th>V</th><th>W</th><th>X</th><th></th></tr></thead>
      <tbody>
        <tr class="r7"><th class="hot">7</th><td colspan="8" class="form-cell selected-cell">自我评定：<div class="selection"><i></i></div></td><td></td><td></td><td></td><td></td><td></td><td></td><td></td><td></td><td></td><td></td><td></td><td></td><td></td><td></td><td></td><td></td><td></td></tr>
        <tr class="r8"><th>8</th><td colspan="8" class="form-cell">科室负责人意见：</td><td></td><td></td><td></td><td></td><td></td><td></td><td></td><td></td><td></td><td></td><td></td><td></td><td></td><td></td><td></td><td></td><td></td></tr>
        <tr class="r9"><th>9</th><td colspan="8" class="form-cell flagged">人事科意见：</td><td></td><td></td><td></td><td></td><td></td><td></td><td></td><td></td><td></td><td></td><td></td><td></td><td></td><td></td><td></td><td></td><td></td></tr>
        <tr class="r10"><th>10</th><td colspan="8" class="form-cell">转正意见（院长填写）：</td><td></td><td></td><td></td><td></td><td></td><td></td><td></td><td></td><td></td><td></td><td></td><td></td><td></td><td></td><td></td><td></td><td></td></tr>
        <tr class="rs"><th>11</th><td colspan="8" class="note-cell">注：填写完毕，科室负责人同意后交至人事科。</td><td></td><td></td><td></td><td></td><td></td><td></td><td></td><td></td><td></td><td></td><td></td><td></td><td></td><td></td><td></td><td></td><td></td></tr>
        <tr class="rs"><th>12</th><td colspan="8"></td><td></td><td></td><td></td><td></td><td></td><td></td><td></td><td></td><td></td><td></td><td></td><td></td><td></td><td></td><td></td><td></td><td></td></tr>
        <tr class="rs"><th>13</th><td></td><td></td><td></td><td></td><td></td><td></td><td></td><td></td><td></td><td></td><td></td><td></td><td></td><td></td><td></td><td></td><td></td><td></td><td></td><td></td><td></td><td></td><td></td><td></td><td></td></tr>
        <tr class="rs"><th>14</th><td colspan="8"></td><td></td><td></td><td></td><td></td><td></td><td></td><td></td><td></td><td></td><td></td><td></td><td></td><td></td><td></td><td></td><td></td><td></td></tr>
        <tr class="rs"><th>15</th><td></td><td></td><td></td><td></td><td></td><td></td><td></td><td></td><td></td><td></td><td></td><td></td><td></td><td></td><td></td><td></td><td></td><td></td><td></td><td></td><td></td><td></td><td></td><td></td><td></td></tr>
      </tbody>
    </table>
  </div>
  <div class="vscroll d-flex flex-column flex-shrink-0">
    <div class="vsplit"><svg width="14" height="12" viewBox="0 0 14 12" stroke="#8795b5"><path d="M2 4.500h10M2 7.500h10"/></svg></div>
    <div class="vtrack flex-fill d-flex flex-column align-items-center">
      <svg width="6" height="10" viewBox="0 0 6 10" fill="#8795b5" stroke="none"><path d="M0 7h6L3 3z"/></svg>
      <div class="vrun d-flex flex-column"><div style="flex:175"></div><div class="vthumb" style="flex:495"></div><div style="flex:101"></div></div>
      <svg width="6" height="10" viewBox="0 0 6 10" fill="#8795b5" stroke="none"><path d="M0 3h6L3 7z"/></svg>
    </div>
  </div>
</main>

<nav class="tabbar d-flex align-items-center">
  <div class="steps d-flex">
    <button class="tool step" aria-label="第一张"><svg class="i14" viewBox="0 0 14 14"><path d="M2.500 1v12M11 1.500L5.500 7l5.500 5.500"/></svg></button>
    <button class="tool step" aria-label="上一张"><svg class="i14" viewBox="0 0 14 14"><path d="M9.500 1.500L4 7l5.500 5.500"/></svg></button>
    <button class="tool step" aria-label="下一张"><svg class="i14" viewBox="0 0 14 14"><path d="M4.500 1.500L10 7l-5.500 5.500"/></svg></button>
    <button class="tool step" aria-label="最后一张"><svg class="i14" viewBox="0 0 14 14"><path d="M3 1.500L8.500 7 3 12.500M11.500 1v12"/></svg></button>
  </div>
  <a href="#" class="sheet-tab text-decoration-none active">Sheet1</a>
  <a href="#" class="sheet-tab text-decoration-none">Sheet2</a>
  <a href="#" class="sheet-tab text-decoration-none">Sheet3</a>
  <button class="tool ms-1" aria-label="新建工作表"><svg class="i14" viewBox="0 0 14 14"><path d="M.5 7.500h13M7.500 1v13"/></svg></button>
  <span class="grip ms-auto"></span>
  <div class="htrack d-flex align-items-center"><i class="htri l me-2"></i><div class="hthumb"></div><i class="htri r ms-auto"></i></div>
  <span class="grip grip-end"></span>
</nav>

<footer class="status d-flex align-items-center">
  <div class="totals d-flex"><span>平均值=0</span><span>计数=1</span><span>求和=0</span></div>
  <div class="d-flex align-items-center ms-auto">
    <span class="rule me-1"></span>
    <button class="tool me-2" aria-label="护眼模式"><svg class="i16" viewBox="0 0 16 16"><path d="M.5 10Q8 1 15.500 10 8 18 .5 10zM8 0v3M2 2l1.500 2M14 2l-1.500 2"/><circle cx="8" cy="10" r="3"/></svg></button>
    <button class="tool gap-1" aria-label="阅读模式"><svg class="i16" viewBox="0 0 16 16"><path d="M5.500 1.500h5v13h-5zM.5 5.500h15v5H.5z"/></svg><i class="arrow"></i></button>
    <span class="rule view-rule"></span>
    <button class="tool view on me-1" aria-label="普通视图"><svg class="i16"><use href="#vnormal"/></svg></button>
    <button class="tool view me-1" aria-label="页面布局"><svg class="i16"><use href="#vpage"/></svg></button>
    <button class="tool view" aria-label="分页预览"><svg class="i16"><use href="#vbreak"/></svg></button>
    <span class="rule mx-2"></span>
    <button class="tool percent me-2 ms-1">100%<i class="arrow"></i></button>
    <button class="tool ms-1" aria-label="缩小"><svg width="10" height="10" viewBox="0 0 10 10"><path d="M0 5h10" stroke-width="2"/></svg></button>
    <input type="range" class="zoomer" value="50" aria-label="缩放">
    <button class="tool me-2" aria-label="放大"><svg width="10" height="10" viewBox="0 0 10 10"><path d="M0 5h10M5 0v10" stroke-width="2"/></svg></button>
    <button class="tool ms-1" aria-label="全屏"><svg class="i14" viewBox="0 0 14 14"><path d="M.5 4.500v-4h4M9.500.5h4v4M13.500 9.500v4h-4M4.500 13.500h-4v-4M.5.500l5 5M13.500.5l-5 5M13.500 13.500l-5-5M.5 13.500l5-5"/></svg></button>
  </div>
</footer>

<div class="taskbar d-flex align-items-stretch">
  <button class="app" aria-label="启动器"><span><svg viewBox="0 0 28 28"><circle cx="14" cy="14" r="13" fill="#e8ebeb"/><path d="M14 6l3 3-3 3-3-3z" fill="#ff6a3d"/><path d="M9 11l3 3-3 3-3-3z" fill="#7fc241"/><path d="M19 11l3 3-3 3-3-3z" fill="#a113c4"/><path d="M14 16l3 3-3 3-3-3z" fill="#2a8cff"/></svg></span></button>
  <button class="app" aria-label="多任务视图"><span><svg viewBox="0 0 28 28"><defs><linearGradient id="ga" x2="0" y2="1"><stop stop-color="#0bce79"/><stop offset="1" stop-color="#06a5ae"/></linearGradient></defs><rect x="1" y="2" width="26" height="24" rx="1" fill="url(#ga)"/><path d="M4 5h4v4H4zM4 12h4v4H4z" fill="#fff"/><path d="M2 21h24v4H2z" fill="#76e5c4"/></svg></span></button>
  <button class="app" aria-label="应用面板"><span><svg viewBox="0 0 28 28"><defs><linearGradient id="gb" x2="0" y2="1"><stop stop-color="#ffa874"/><stop offset="1" stop-color="#fb6466"/></linearGradient></defs><rect x="2" y="2" width="24" height="24" rx="3" fill="url(#gb)"/><rect x="6" y="7" width="8" height="6" rx="1" fill="#fff"/><rect x="16" y="7" width="6" height="6" rx="1" fill="#fff"/><path d="M6 15h4v5H6zM12 15h10v5H12z" fill="#ffd4c2"/></svg></span></button>
  <button class="app open first" aria-label="文件管理器"><span><svg viewBox="0 0 28 28"><path d="M3 8l11-6 11 6v6H3z" fill="#1375d6"/><path d="M4 8q10-6 20-2l1 5H3z" fill="#fff"/><path d="M5 7q10-4 19-1v2z" fill="#fa5268"/><path d="M2 10l24-1v15q0 3-3 3H5q-3 0-3-3z" fill="#1494ff"/><circle cx="14" cy="14" r="2" stroke="#fff" stroke-width="1.500" fill="none"/><path d="M14 17v7" stroke="#d8efff"/></svg></span></button>
  <button class="app" aria-label="应用商店"><span><svg viewBox="0 0 28 28"><rect x="2" y="2" width="24" height="24" rx="3" fill="#ff7a16"/><path d="M2 9l1-6q11-2 22 0l1 6z" fill="#f4eee8"/><path d="M7 10v16M13 10v16M19 10v16" stroke="#ff9e3c" stroke-width="2"/><path d="M8 7c0 10 12 10 12 0" stroke="#eee0d0" stroke-width="1.500"/><circle cx="7" cy="5" r="1" fill="#888"/><circle cx="21" cy="5" r="1" fill="#888"/></svg></span></button>
  <button class="app" aria-label="控制中心"><span><svg viewBox="0 0 28 28"><circle cx="14" cy="14" r="12.500" fill="#3426dd"/><circle cx="14" cy="14" r="8.500" stroke="#c9cbe0" stroke-width="2.500"/><circle cx="14" cy="14" r="10.500" stroke="#c9cbe0" stroke-width="2" stroke-dasharray="2 1.300"/><circle cx="14" cy="14" r="7" fill="#2f3458"/><path d="M14 14v7M14 14l-6-4M14 14l6-4" stroke="#d6d9e8" stroke-width="2"/><circle cx="14" cy="14" r="2.500" fill="#d6d9e8"/></svg></span></button>
  <button class="app open" aria-label="企业微信"><span><svg viewBox="0 0 28 28"><rect x="3" y="3" width="23" height="23" rx="4" fill="#fff"/><path d="M16 20c-3 1-5 0-6-.5L6 21l.5-3.500C0 11 6 5 12 5c6 0 10 4 8.500 9" stroke="#2a8cff" stroke-width="1.500"/><path d="M20 14l2 3-2 1z" fill="#46b83d"/><path d="M22 18h4l-2 3z" fill="#ff5a35"/><path d="M16 19l3-1v3z" fill="#2a8cff"/><path d="M20 20l3 3-3 1z" fill="#ffb800"/></svg></span></button>
  <button class="app open" aria-label="微信"><span><svg viewBox="0 0 28 28"><rect x="2" y="2" width="24" height="24" rx="4" fill="#20d968"/><ellipse cx="11" cy="12" rx="6" ry="5" fill="#fff"/><path d="M7 15l-1 4 4-2z" fill="#fff"/><ellipse cx="18" cy="16" rx="5.500" ry="4.500" fill="#fff" stroke="#20d968" stroke-width=".8"/><path d="M19 19l2 3 1-4z" fill="#fff"/><g fill="#188c48"><circle cx="9" cy="11" r=".8"/><circle cx="13" cy="11" r=".8"/><circle cx="16" cy="15" r=".8"/><circle cx="20" cy="15" r=".8"/></g></svg></span></button>
  <button class="app open" aria-label="浏览器"><span><svg viewBox="0 0 28 28"><defs><linearGradient id="gc" x2="0" y2="1"><stop stop-color="#3cc0ff"/><stop offset="1" stop-color="#1b55e0"/></linearGradient></defs><circle cx="14" cy="14" r="13" fill="#f1f3f5"/><path d="M5 13C9 4 20 4 26 9c3 9-2 18-12 18 8-3 9-12 3-14-3-1-5 0-5 2-1-2 0-4 2-5-3-1-7 1-9 3z" fill="url(#gc)"/></svg></span></button>
  <button class="app open" aria-label="WPS Office"><span><svg><use href="#wps"/></svg></span></button>
  <button class="app current" aria-label="WPS 表格"><span><svg><use href="#wps"/></svg></span></button>
  <div class="d-flex align-items-center ms-auto">
    <button class="tool tray-up" aria-label="展开托盘"><svg width="10" height="6" viewBox="0 0 10 6" stroke-width="1.500"><path d="M.5 5.500L5 1l4.500 4.500"/></svg></button>
    <svg width="13" height="10" viewBox="0 0 13 10" stroke="none" class="tray-kb"><rect width="13" height="10" rx="1" fill="#554f4f"/><path d="M2 2.500h9M2 4.500h9M3 7h7" stroke="#162e33" stroke-dasharray="1 1"/></svg>
    <svg width="18" height="14" viewBox="0 0 18 14" stroke-width="1.500" class="me-2"><path d="M1.500 5q7.500-7 15 0M4 7.500q5-5 10 0M6.500 10q2.500-2.500 5 0"/><circle cx="9" cy="11.500" r="1.500" fill="#fff"/></svg>
    <svg width="15" height="14" viewBox="0 0 15 14" stroke="none" class="tray-sw"><rect width="15" height="6" rx="3" fill="#c3cbcd"/><rect y="8" width="15" height="6" rx="3" fill="#c3cbcd"/><circle cx="12" cy="3" r="1.500" fill="#1c353a"/><circle cx="3" cy="11" r="1.500" fill="#1c353a"/></svg>
    <button class="tool" aria-label="电源"><svg width="20" height="20" viewBox="0 0 20 20" stroke="#14323a"><circle cx="10" cy="10" r="10" fill="#fff" stroke="none"/><path d="M7 5.500a5.500 5.500 0 1 0 6 0M10 4v6" stroke-width="1.500"/></svg></button>
    <div class="clock"><b>8:32</b>2023/5/29</div>
    <span class="rule ms-1 opacity-25"></span>
    <button class="tool bin" aria-label="回收站"><svg width="22" height="24" viewBox="0 0 22 24" stroke="none"><path d="M0 1h22l-3 22H3z" fill="#e9ecef"/><path d="M2 12h18l-1 10H4z" fill="#c8d77e"/><path d="M3 6h16v7H3z" fill="#c3ccdf"/><circle cx="11" cy="12" r="5" fill="#6ea51c"/><path d="M11 9l3 5H8z" stroke="#345d0a" fill="#9dc63f"/></svg></button>
    <button class="tool peek" aria-label="显示桌面"></button>
  </div>
</div>

<script src="https://cdn.jsdelivr.net/npm/bootstrap@5.3.0/dist/js/bootstrap.bundle.min.js"></script>
</body>
</html>
